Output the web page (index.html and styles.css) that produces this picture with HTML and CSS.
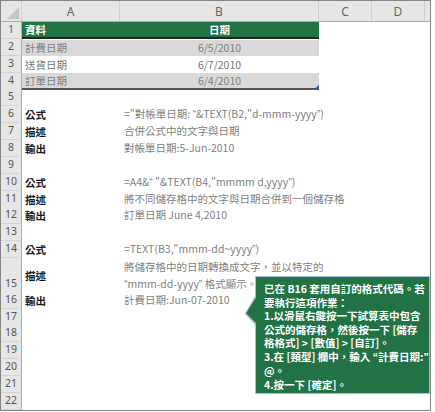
FILE: index.html
```html
<!DOCTYPE html>
<html lang="zh-Hant">
<head>
    <meta charset="UTF-8">
    <title>TEXT 函數</title>
    <link rel="stylesheet" href="styles.css">
</head>
<body>
<div class="sheet">
    <div class="row colhead">
        <div class="corner"><span class="tri"></span></div>
        <div class="ch">A</div>
        <div class="ch">B</div>
        <div class="ch">C</div>
        <div class="ch">D</div>
        <div class="ch last"></div>
    </div>

    <div class="row">
        <div class="rh">1</div>
        <div class="c th">資料</div>
        <div class="c th mid">日期</div>
        <div class="c"></div>
    </div>
    <div class="row">
        <div class="rh">2</div>
        <div class="c band top">計費日期</div>
        <div class="c band top mid">6/5/2010</div>
        <div class="c"></div>
    </div>
    <div class="row">
        <div class="rh">3</div>
        <div class="c soft">送貨日期</div>
        <div class="c soft mid">6/7/2010</div>
        <div class="c"></div>
    </div>
    <div class="row">
        <div class="rh">4</div>
        <div class="c band end">訂單日期</div>
        <div class="c band end mid">6/4/2010<span class="handle"></span></div>
        <div class="c"></div>
    </div>
    <div class="row">
        <div class="rh">5</div>
        <div class="c"></div><div class="c"></div><div class="c"></div>
    </div>

    <div class="row">
        <div class="rh">6</div>
        <div class="c label">公式</div>
        <div class="c note">="對帳單日期: <span class="q">“</span>&amp;TEXT(B2,"d-mmm-yyyy<span class="q">”</span>)</div>
        <div class="c"></div>
    </div>
    <div class="row">
        <div class="rh">7</div>
        <div class="c label">描述</div>
        <div class="c note">合併公式中的文字與日期</div>
        <div class="c"></div>
    </div>
    <div class="row">
        <div class="rh">8</div>
        <div class="c label">輸出</div>
        <div class="c note">對帳單日期:5-Jun-2010</div>
        <div class="c"></div>
    </div>
    <div class="row">
        <div class="rh">9</div>
        <div class="c"></div><div class="c"></div><div class="c"></div>
    </div>

    <div class="row">
        <div class="rh">10</div>
        <div class="c label">公式</div>
        <div class="c note">=A4&amp;<span class="q">“</span> "&amp;TEXT(B4,"mmmm d,yyyy<span class="q">”</span>)</div>
        <div class="c"></div>
    </div>
    <div class="row">
        <div class="rh">11</div>
        <div class="c label">描述</div>
        <div class="c note">將不同儲存格中的文字與日期合併到一個儲存格</div>
        <div class="c"></div>
    </div>
    <div class="row">
        <div class="rh">12</div>
        <div class="c label">輸出</div>
        <div class="c note">訂單日期 June 4,2010</div>
        <div class="c"></div>
    </div>
    <div class="row">
        <div class="rh">13</div>
        <div class="c"></div><div class="c"></div><div class="c"></div>
    </div>

    <div class="row">
        <div class="rh">14</div>
        <div class="c label">公式</div>
        <div class="c note">=TEXT(B3,"mmm-dd~yyyy<span class="q">”</span>)</div>
        <div class="c"></div>
    </div>
    <div class="row tall">
        <div class="rh">15</div>
        <div class="c label">描述</div>
        <div class="c note wrap">將儲存格中的日期轉換成文字，並以特定的<br><span class="q">“</span>mmm-dd-yyyy<span class="q">”</span> 格式顯示。</div>
        <div class="c"></div>
    </div>
    <div class="row">
        <div class="rh">16</div>
        <div class="c label">輸出</div>
        <div class="c note">計費日期:Jun-07-2010</div>
        <div class="c"></div>
    </div>

    <div class="row"><div class="rh">17</div><div class="c"></div><div class="c"></div><div class="c"></div></div>
    <div class="row"><div class="rh">18</div><div class="c"></div><div class="c"></div><div class="c"></div></div>
    <div class="row"><div class="rh">19</div><div class="c"></div><div class="c"></div><div class="c"></div></div>
    <div class="row"><div class="rh">20</div><div class="c"></div><div class="c"></div><div class="c"></div></div>
    <div class="row"><div class="rh">21</div><div class="c"></div><div class="c"></div><div class="c"></div></div>
    <div class="row"><div class="rh">22</div><div class="c"></div><div class="c"></div><div class="c"></div></div>

    <!-- 說明框 -->
    <div class="callout">
        已在 B16 套用自訂的格式代碼。若<br>
        要執行這項作業：<br>
        1.以滑鼠右鍵按一下試算表中包含<br>
        公式的儲存格，然後按一下 [儲存<br>
        格格式] &gt; [數值] &gt; [自訂]。<br>
        3.在 [類型] 欄中，輸入 <span class="q">“</span>計費日期:<span class="q">”</span><br>
        @。<br>
        4.按一下 [確定]。
    </div>
</div>
</body>
</html>
```

FILE: styles.css
```css
* {
    margin: 0;
    padding: 0;
    box-sizing: border-box;
}

body {
    background: #fff;
    font-family: "Noto Sans CJK TC", "Noto Sans", sans-serif;
    font-size: 10.5px;
    color: #222;
}

.q {
    font-family: "Liberation Sans", sans-serif;
}

.sheet {
    position: relative;
    width: 431px;
    height: 411px;
    border: 1px solid #858585;
    background: #fff;
    overflow: hidden;
}

.row {
    display: grid;
    grid-template-columns: 21px 98px 199px 1fr;
    height: 16.87px;
}

.row.tall {
    height: 33.74px;
}

/* 欄標題 */
.colhead {
    grid-template-columns: 21px 98px 199px 53px 53px 1fr;
    height: 21px;
    background: #e6e6e6;
    border-bottom: 1px solid #ababab;
}

.corner {
    position: relative;
    border-right: 1px solid #cfcfcf;
}

.corner .tri {
    position: absolute;
    right: 2px;
    bottom: 2px;
    width: 12px;
    height: 12px;
    background: #c4c4c4;
    clip-path: polygon(100% 0, 100% 100%, 0 100%);
}

.ch {
    display: flex;
    align-items: center;
    justify-content: center;
    font-family: "Noto Sans", sans-serif;
    font-size: 12px;
    color: #666;
    border-right: 1px solid #cfcfcf;
}

.ch.last {
    border-right: 0;
}

/* 列標題 */
.rh {
    display: flex;
    align-items: flex-end;
    justify-content: center;
    padding-bottom: 1px;
    background: #e6e6e6;
    border-right: 1px solid #ababab;
    border-bottom: 1px solid #d4d4d4;
    font-family: "Noto Sans", sans-serif;
    font-size: 10.5px;
    line-height: 15px;
    color: #555;
}

.c {
    display: flex;
    align-items: center;
    padding: 0 3px;
    white-space: nowrap;
}

.c.mid {
    justify-content: center;
}

/* 表格 */
.c.th {
    background: #217346;
    color: #fff;
    font-weight: bold;
    border-bottom: 2px solid #262626;
}

.c.band {
    background: #d9d9d9;
    color: #808080;
}

.c.band.top {
    border-top: 1px solid #fff;
}

.c.band.end {
    border-bottom: 2px solid #555;
    position: relative;
}

.c.soft {
    color: #777;
}

.handle {
    position: absolute;
    right: 0;
    bottom: -1px;
    width: 4px;
    height: 4px;
    background: #3a6fc4;
    clip-path: polygon(100% 0, 100% 100%, 0 100%);
}

.c.label {
    font-weight: bold;
    color: #1a1a1a;
}

.c.note {
    display: block;
    color: #7f7f7f;
    padding-left: 4px;
    line-height: 16.87px;
}

.c.wrap {
    line-height: 17px;
}

/* 說明框 */
.callout {
    position: absolute;
    left: 254px;
    top: 275px;
    width: 175px;
    height: 118px;
    padding: 5px 0 0 8px;
    background: #217346;
    border: 1px solid #a6bed4;
    color: #fff;
    font-weight: bold;
    font-size: 10.5px;
    line-height: 13.5px;
    white-space: nowrap;
}

.callout::before,
.callout::after {
    content: "";
    position: absolute;
    clip-path: polygon(100% 0, 0 62%, 100% 100%);
}

.callout::before {
    left: -11px;
    top: 17px;
    width: 11px;
    height: 32px;
    background: #a6bed4;
}

.callout::after {
    left: -10px;
    top: 19px;
    width: 11px;
    height: 28px;
    background: #217346;
}
```
